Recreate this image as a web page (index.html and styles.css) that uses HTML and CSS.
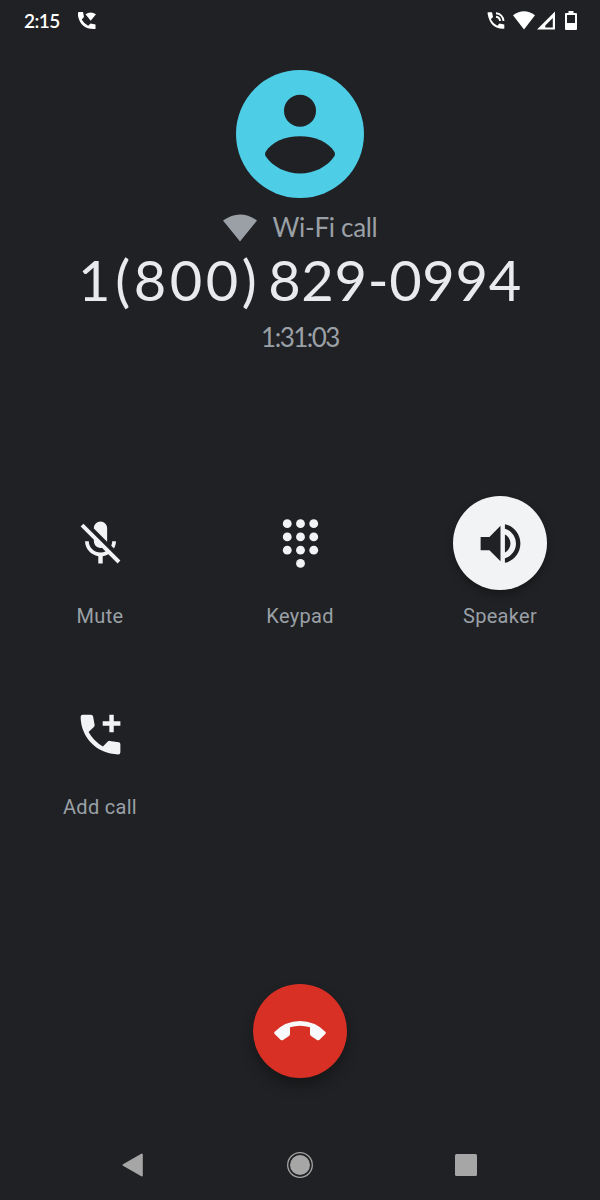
FILE: index.html
```html
<!DOCTYPE html>
<html lang="en">
<head>
  <meta charset="UTF-8" />
  <meta name="viewport" content="width=device-width, initial-scale=1.0"/>
  <title>Call</title>
  <link rel="stylesheet" href="styles.css">
</head>
<body>
  <div class="screen">
    <div class="statusbar">
      <span class="clock">2:15</span>
      <svg class="wifi-calling" width="18" height="18" viewBox="0 0 18 18">
        <path d="M0 1Q0 0 1 0H5L6 5 3.7 7.4Q6 11.6 10.2 13.8L12.5 11.5 17.5 12.5V17Q3 18 0 4Z"/>
        <path d="M7.5 2.2Q12.6-1.4 18 2.2L12.7 8.8Z"/>
      </svg>
      <div class="indicators">
        <svg width="18" height="18" viewBox="0 0 18 18">
          <path d="M.5 1Q.5.3 1.2.3H5L6 5 3.8 7.2Q6 11.6 10.3 13.7L12.5 11.5 17.3 12.5V16.8Q3 17.6.5 1Z"/>
          <path d="M9 4.8A4.6 4.6 0 0 1 13 9M9 1.2A8 8 0 0 1 16.5 9" fill="none" stroke="#fff" stroke-width="1.9"/>
        </svg>
        <svg class="wifi" width="22" height="19" viewBox="0 0 22 19">
          <path d="M0 4.2Q11-3.6 22 4.2L11 18.5Z"/>
        </svg>
        <svg class="signal" width="18" height="19" viewBox="0 0 18 19">
          <path d="M0 18.5 18 .5V18.5ZM8.3 16.5H15.8V7L8.3 14.5Z" fill-rule="evenodd"/>
        </svg>
        <svg class="battery" width="12" height="20" viewBox="0 0 12 20">
          <path d="M3.5 0H8.5V2H11Q12 2 12 3V18Q12 19 11 19H1Q0 19 0 18V3Q0 2 1 2H3.5ZM2 4V12H10V4Z" fill-rule="evenodd"/>
        </svg>
      </div>
    </div>

    <div class="caller">
      <svg class="avatar" width="128" height="128" viewBox="0 0 128 128">
        <circle cx="64" cy="64" r="64" fill="#4dcde6"/>
        <circle cx="64" cy="40.8" r="16" fill="#202124"/>
        <path d="M29.5 82C36 71.5 49 66.2 64 66.2S92 71.5 98.5 82Q99.500 84 98.5 86C91 97 78 103.5 64 103.5S37 97 29.5 86Q28.5 84 29.5 82Z" fill="#202124"/>
      </svg>
      <div class="call-type">
        <svg width="34" height="28" viewBox="0 0 34 28">
          <path d="M0 6.5Q17-5.6 34 6.5L17 27.5Z" fill="#9aa0a6"/>
        </svg>
        <span>Wi-Fi call</span>
      </div>
      <div class="number"><span>1</span><span class="area">(800)</span><span>829-0994</span></div>
      <div class="timer">1:31:03</div>
    </div>

    <div class="controls">
      <div class="control">
        <div class="round">
          <svg width="53" height="53" viewBox="0 0 24 24">
            <path d="M19 11h-1.7c0 .74-.16 1.43-.43 2.05l1.23 1.23c.56-.98.9-2.09.9-3.28zm-4.02.17c0-.06.02-.11.02-.17V5c0-1.66-1.34-3-3-3S9 3.34 9 5v.18l5.98 5.99zM4.27 3L3 4.27l6.01 6.01V11c0 1.66 1.33 3 2.99 3 .22 0 .44-.03.65-.08l1.66 1.66c-.71.33-1.5.52-2.31.52-2.76 0-5.3-2.1-5.3-5.1H5c0 3.41 2.72 6.23 6 6.72V21h2v-3.28c.91-.13 1.77-.45 2.54-.9L19.73 21 21 19.73 4.27 3z"/>
          </svg>
        </div>
        <span>Mute</span>
      </div>
      <div class="control">
        <div class="round">
          <svg width="53" height="53" viewBox="0 0 24 24">
            <circle cx="6" cy="3" r="2"/><circle cx="12" cy="3" r="2"/><circle cx="18" cy="3" r="2"/>
            <circle cx="6" cy="9" r="2"/><circle cx="12" cy="9" r="2"/><circle cx="18" cy="9" r="2"/>
            <circle cx="6" cy="15" r="2"/><circle cx="12" cy="15" r="2"/><circle cx="18" cy="15" r="2"/>
            <circle cx="12" cy="21" r="2"/>
          </svg>
        </div>
        <span>Keypad</span>
      </div>
      <div class="control">
        <div class="round active">
          <svg width="53" height="53" viewBox="0 0 24 24">
            <path d="M3 9v6h4l5 5V4L7 9H3zm13.5 3c0-1.77-1.02-3.29-2.5-4.03v8.05c1.48-.73 2.5-2.25 2.5-4.02zM14 3.23v2.06c2.89.86 5 3.54 5 6.71s-2.11 5.85-5 6.71v2.06c4.01-.91 7-4.49 7-8.77s-2.99-7.86-7-8.77z"/>
          </svg>
        </div>
        <span>Speaker</span>
      </div>
      <div class="control">
        <div class="round">
          <svg width="53" height="53" viewBox="0 0 24 24">
            <path d="M3 4Q3 3 4 3H7.7Q8.5 3 8.65 3.8L9.35 7.7Q9.4 8.2 9 8.6L6.6 10.9Q9 15.2 13.1 17.4L15.3 15.2Q15.7 14.8 16.2 14.9L20.2 15.5Q21 15.6 21 16.4V20Q21 21 20 21C10.6 21 3 13.4 3 4Z"/>
            <path d="M16 3h2v3h3v2h-3v3h-2V8h-3V6h3z"/>
          </svg>
        </div>
        <span>Add call</span>
      </div>
    </div>

    <div class="end-call">
      <svg width="52" height="20" viewBox="0 0 52 20">
        <path d="M.7 13Q-.4 11.8.7 10.7Q11.5 0 26 0T51.3 10.7Q52.4 11.8 51.3 13L45.5 18.7Q44.3 19.800 43 18.9L37 14.9Q36 14.2 36 13V6.2Q26 3.2 16 6.2V13Q16 14.2 15 14.9L9 18.9Q7.7 19.8 6.5 18.7Z" fill="#f8f9fa"/>
      </svg>
    </div>

    <div class="navbar">
      <svg width="26" height="26" viewBox="0 0 26 26">
        <path d="M2.5 13 20.8 2.5V23.5Z" stroke="#a6a6a6" stroke-width="2" stroke-linejoin="round"/>
      </svg>
      <svg width="26" height="26" viewBox="0 0 26 26">
        <circle cx="13" cy="13" r="10"/>
        <circle cx="13" cy="13" r="12.3" fill="none" stroke="#a6a6a6" stroke-width="1.3"/>
      </svg>
      <svg width="26" height="26" viewBox="0 0 26 26">
        <rect x="2" y="2" width="22" height="22" rx="1.5"/>
      </svg>
    </div>
  </div>
</body>
</html>
```
FILE: styles.css
```css
body {
  margin: 0;
  background: #202124;
  font-family: Roboto, sans-serif;
}
svg {
  display: block;
}
.screen {
  width: 600px;
  height: 1200px;
  display: flex;
  flex-direction: column;
  overflow: hidden;
}
.statusbar {
  height: 41px;
  padding: 0 23px 0 24px;
  display: flex;
  align-items: center;
  flex-shrink: 0;
  box-sizing: border-box;
  color: #fff;
  fill: #fff;
}
.clock {
  width: 54px;
  font-family: Lato, sans-serif;
  font-size: 19px;
  font-weight: 600;
  letter-spacing: -0.5px;
}
.indicators {
  display: flex;
  align-items: center;
  margin-left: auto;
}
.wifi {
  margin-left: 8px;
}
.signal {
  margin-left: 2px;
}
.battery {
  margin-left: 10px;
}
.caller {
  height: 455px;
  padding-top: 29px;
  box-sizing: border-box;
  display: flex;
  flex-direction: column;
  align-items: center;
  flex-shrink: 0;
  font-family: Lato, sans-serif;
  color: #9aa0a6;
}
.call-type {
  display: flex;
  align-items: center;
  gap: 16px;
  height: 32px;
  margin-top: 14px;
  font-size: 26px;
  letter-spacing: -0.3px;
}
.call-type span {
  padding-bottom: 2px;
}
.number {
  display: flex;
  margin-top: 3px;
  height: 66px;
  line-height: 66px;
  font-size: 56px;
  letter-spacing: 0.7px;
  color: #e8eaed;
  white-space: nowrap;
}
.number .area {
  margin: 0 8px 0 4px;
  letter-spacing: 3.5px;
}
.timer {
  margin-top: 8px;
  line-height: 32px;
  font-size: 26px;
  letter-spacing: -1.5px;
}
.controls {
  display: grid;
  grid-template-columns: repeat(3, 200px);
  grid-auto-rows: 191px;
  fill: #f1f3f4;
}
.control {
  display: flex;
  flex-direction: column;
  align-items: center;
  font-size: 20px;
  letter-spacing: 0.3px;
  line-height: 24px;
  color: #9aa0a6;
}
.round {
  width: 94px;
  height: 94px;
  margin-bottom: 14px;
  border-radius: 50%;
  display: flex;
  align-items: center;
  justify-content: center;
}
.round.active {
  background: #f1f3f4;
  fill: #202124;
  box-shadow: 0 4px 8px rgba(0, 0, 0, 0.3);
}
.end-call {
  width: 94px;
  height: 94px;
  margin: 106px auto 0;
  border-radius: 50%;
  background: #d93025;
  box-shadow: 0 8px 14px rgba(0, 0, 0, 0.3);
  display: flex;
  align-items: center;
  justify-content: center;
  flex-shrink: 0;
}
.navbar {
  margin-top: auto;
  height: 70px;
  padding: 0 121px;
  display: flex;
  align-items: center;
  justify-content: space-between;
  fill: #a6a6a6;
}
```
